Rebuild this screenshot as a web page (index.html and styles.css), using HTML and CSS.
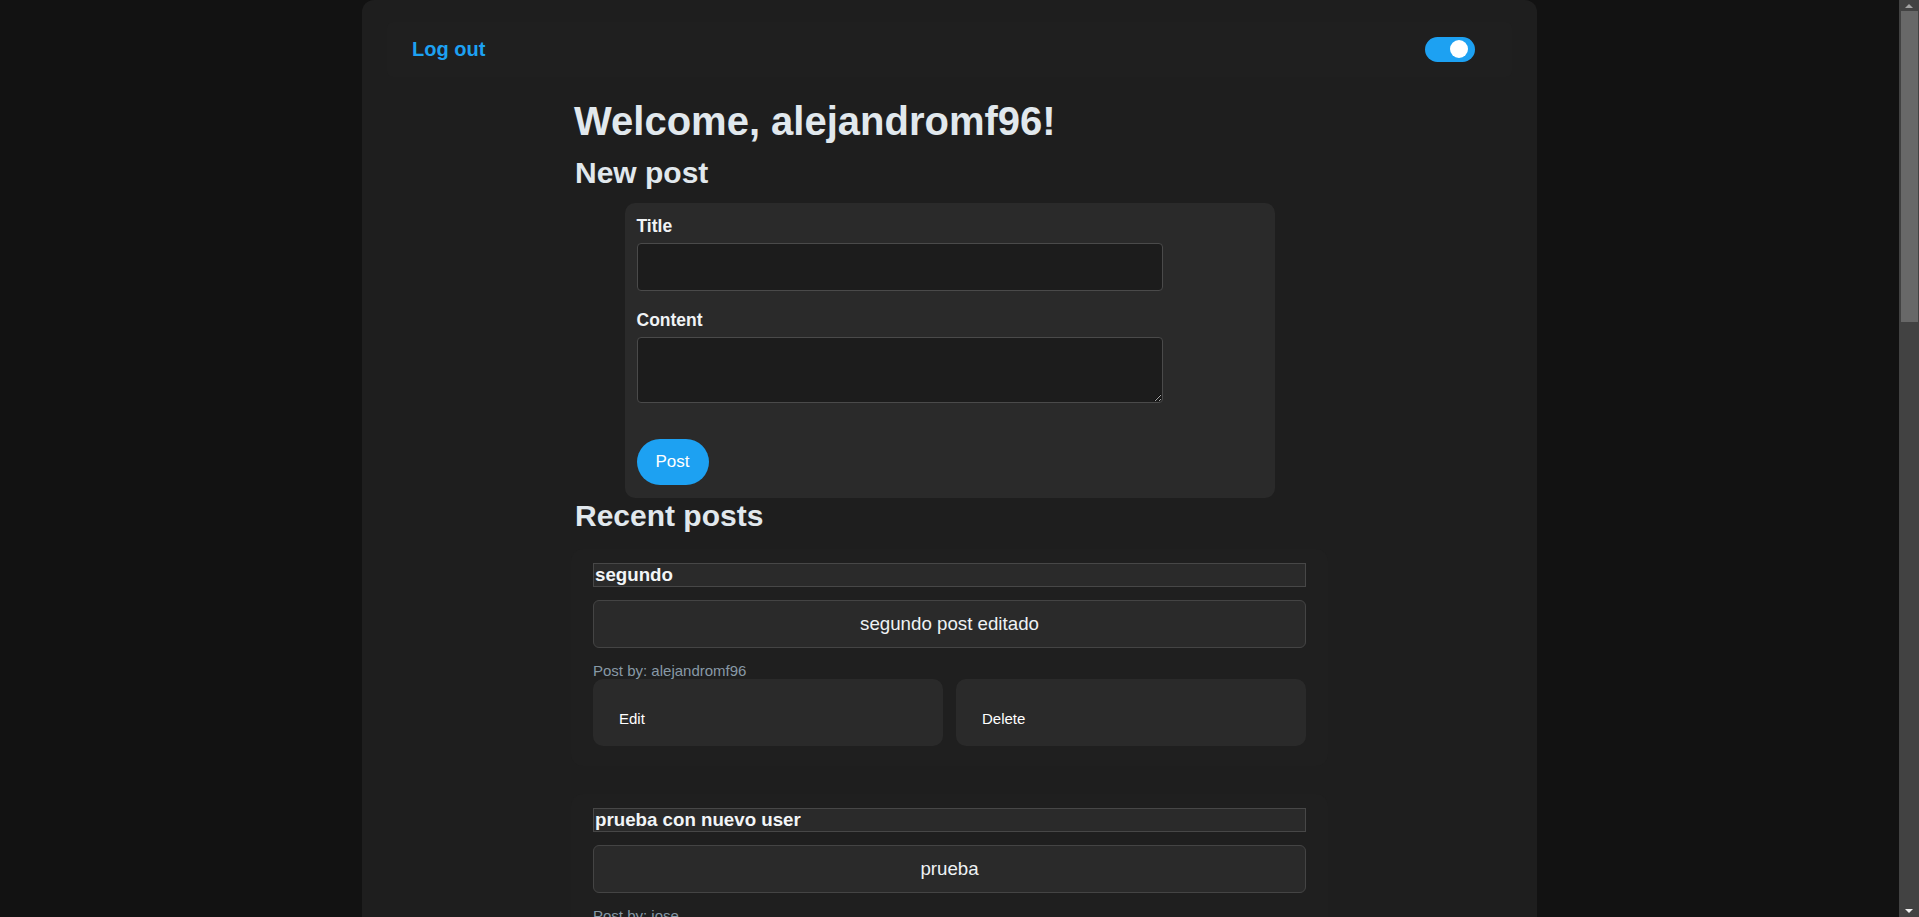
FILE: index.html
```html
<!DOCTYPE html>
<html lang="en">
<head>
<meta charset="utf-8">
<title>Home</title>
<link rel="stylesheet" href="styles.css">
</head>
<body>
<div class="app">
  <header class="topbar">
    <a class="logout" href="#">Log out</a>
    <label class="switch"><span class="knob"></span></label>
  </header>
  <main class="column">
    <h1 class="welcome">Welcome, alejandromf96!</h1>
    <h2 class="section-title">New post</h2>
    <form class="new-post">
      <label class="field-label">Title</label>
      <input class="field-input" type="text">
      <label class="field-label content-label">Content</label>
      <textarea class="field-area"></textarea>
      <button class="post-btn" type="button">Post</button>
    </form>
    <h2 class="section-title">Recent posts</h2>
    <div class="posts">
      <article class="post">
        <h3 class="post-title">segundo</h3>
        <div class="post-body">segundo post editado</div>
        <p class="post-by">Post by: alejandromf96</p>
        <div class="post-actions">
          <button class="action" type="button">Edit</button>
          <button class="action" type="button">Delete</button>
        </div>
      </article>
      <article class="post">
        <h3 class="post-title">prueba con nuevo user</h3>
        <div class="post-body">prueba</div>
        <p class="post-by">Post by: jose</p>
        <div class="post-actions">
          <button class="action" type="button">Edit</button>
          <button class="action" type="button">Delete</button>
        </div>
      </article>
      <article class="post">
        <h3 class="post-title">primer post</h3>
        <div class="post-body">hola a todos</div>
        <p class="post-by">Post by: alejandromf96</p>
        <div class="post-actions">
          <button class="action" type="button">Edit</button>
          <button class="action" type="button">Delete</button>
        </div>
      </article>
      <article class="post">
        <h3 class="post-title">test</h3>
        <div class="post-body">contenido de prueba</div>
        <p class="post-by">Post by: jose</p>
        <div class="post-actions">
          <button class="action" type="button">Edit</button>
          <button class="action" type="button">Delete</button>
        </div>
      </article>
      <article class="post">
        <h3 class="post-title">hola</h3>
        <div class="post-body">mundo</div>
        <p class="post-by">Post by: alejandromf96</p>
        <div class="post-actions">
          <button class="action" type="button">Edit</button>
          <button class="action" type="button">Delete</button>
        </div>
      </article>
      <article class="post">
        <h3 class="post-title">otro post</h3>
        <div class="post-body">más contenido</div>
        <p class="post-by">Post by: jose</p>
        <div class="post-actions">
          <button class="action" type="button">Edit</button>
          <button class="action" type="button">Delete</button>
        </div>
      </article>
      <article class="post">
        <h3 class="post-title">bienvenida</h3>
        <div class="post-body">primer mensaje</div>
        <p class="post-by">Post by: alejandromf96</p>
        <div class="post-actions">
          <button class="action" type="button">Edit</button>
          <button class="action" type="button">Delete</button>
        </div>
      </article>
    </div>
  </main>
</div>
<div class="fake-scrollbar" aria-hidden="true">
  <span class="arrow-up"></span>
  <span class="thumb"></span>
  <span class="arrow-down"></span>
</div>
</body>
</html>
```
FILE: styles.css
```css
html {
  color-scheme: dark;
  background: #121212;
}
body {
  margin: 0;
  padding-right: 20px;
  background: #121212;
  font-family: "Liberation Sans", Arial, sans-serif;
  color: #e1e8ed;
}
.app {
  width: 1175px;
  margin: 0 auto;
  box-sizing: border-box;
  background: #1e1e1e;
  border-radius: 12px 12px 0 0;
  padding: 22px 25px 40px;
}
.topbar {
  height: 55px;
  background: #1f1f1f;
  border-radius: 6px;
  display: flex;
  align-items: center;
  justify-content: space-between;
  padding: 0 37px 0 25px;
}
.logout {
  color: #1da1f2;
  font-weight: bold;
  font-size: 20px;
  text-decoration: none;
}
.switch {
  width: 50px;
  height: 25px;
  border-radius: 13px;
  background: #1da1f2;
  position: relative;
}
.knob {
  position: absolute;
  left: 25px;
  top: 3px;
  width: 18px;
  height: 18px;
  border-radius: 50%;
  background: #fff;
}
.column {
  width: 757px;
  margin: 0 auto;
}
.welcome {
  font-size: 40px;
  margin: 21px 0 0 3px;
  line-height: 46px;
}
.section-title {
  font-size: 30px;
  line-height: 34px;
  margin: 12px 0 0 4px;
}
.new-post {
  width: 650px;
  box-sizing: border-box;
  margin: 13px auto 0;
  background: #2a2a2a;
  border-radius: 10px;
  padding: 12px 12px;
  display: flex;
  flex-direction: column;
  align-items: flex-start;
}
.field-label {
  font-size: 17.5px;
  font-weight: bold;
  line-height: 20px;
  margin-top: 1px;
  color: #f0f3f5;
}
.content-label {
  margin-top: 19px;
}
.field-input,
.field-area {
  width: 526px;
  box-sizing: border-box;
  margin-top: 7px;
  background: #1c1c1c;
  border: 1px solid #4a4a4a;
  border-radius: 4px;
  color: #fff;
  font-family: inherit;
}
.field-input {
  height: 48px;
}
.field-area {
  height: 66px;
}
.post-btn {
  margin-top: 36px;
  height: 46px;
  padding: 0 19px;
  border: none;
  border-radius: 23px;
  background: #1da1f2;
  color: #fff;
  font-family: inherit;
  font-size: 17px;
}
.new-post {
  padding-bottom: 13px;
}
.new-post + .section-title {
  margin-top: 1px;
}
.posts {
  margin-top: 16px;
  display: flex;
  flex-direction: column;
  gap: 28px;
}
.post {
  background: #1f1f1f;
  border-radius: 12px;
  padding: 14px 22px 20px;
}
.post-title {
  margin: 0;
  font-size: 18.72px;
  line-height: 22px;
  padding-left: 1px;
  background: #2a2a2a;
  border: 1px solid #474747;
  color: #f2f5f7;
}
.post-body {
  margin-top: 13px;
  background: #2a2a2a;
  border: 1px solid #444;
  border-radius: 6px;
  padding: 12px;
  line-height: 22px;
  font-size: 18.72px;
  text-align: center;
  color: #eef2f5;
}
.post-by {
  margin: 14px 0 0;
  font-size: 15px;
  line-height: 17px;
  color: #8899a6;
}
.post-actions {
  display: grid;
  grid-template-columns: 1fr 1fr;
  gap: 13px;
}
.action {
  height: 67px;
  border: none;
  border-radius: 10px;
  background: #2a2a2a;
  color: #fff;
  font-family: inherit;
  font-size: 15px;
  text-align: left;
  padding: 11px 26px 0;
}
.fake-scrollbar {
  position: fixed;
  top: 0;
  right: 0;
  width: 20px;
  height: 100vh;
  background: #424242;
}
.thumb {
  position: absolute;
  top: 11px;
  left: 2px;
  width: 17px;
  height: 311px;
  background: #686868;
}
.arrow-up,
.arrow-down {
  position: absolute;
  left: 6px;
  width: 0;
  height: 0;
  border-left: 4px solid transparent;
  border-right: 4px solid transparent;
}
.arrow-up {
  top: 4px;
  border-bottom: 4px solid #a3a3a3;
}
.arrow-down {
  bottom: 4px;
  border-top: 4px solid #f0f0f0;
}
```
